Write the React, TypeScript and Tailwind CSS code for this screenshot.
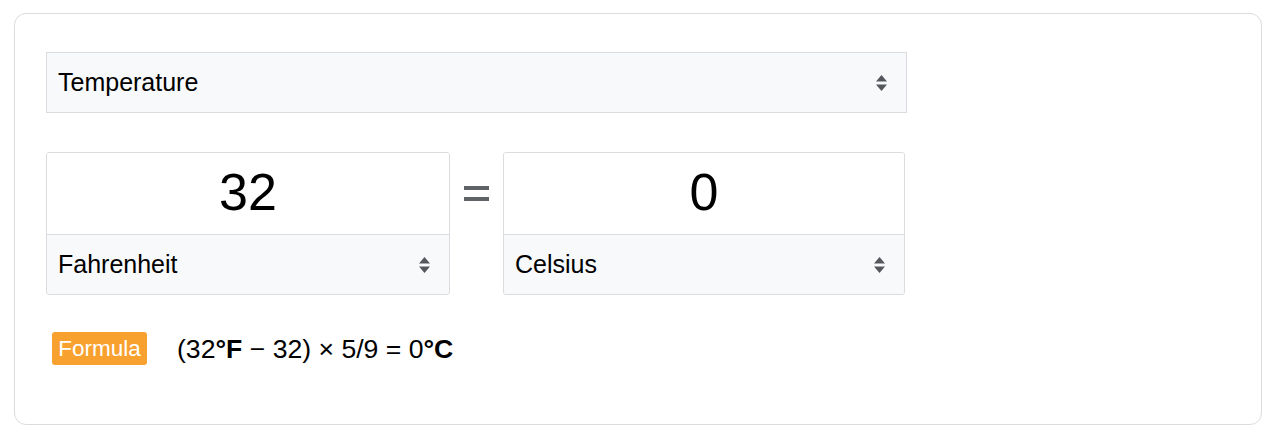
import React from "react";

const Chevrons = () => (
  <svg width="13" height="20" viewBox="0 0 13 20" className="shrink-0">
    <path d="M6.5 2 L12 8.5 L1 8.5 Z" fill="#54585c" />
    <path d="M1 11.5 L12 11.5 L6.5 18 Z" fill="#54585c" />
  </svg>
);

const SelectBox = ({ label, extra = "" }: { label: string; extra?: string }) => (
  <div
    className={`flex items-center justify-between bg-[#f8f9fa] pl-[11px] pr-[18px] text-[25px] text-black ${extra}`}
  >
    <span>{label}</span>
    <Chevrons />
  </div>
);

const UnitBox = ({ value, unit, width }: { value: string; unit: string; width: string }) => (
  <div className={`${width} h-[143px] flex flex-col border border-[#dadce0] rounded-[3px] overflow-hidden`}>
    <div className="h-[82px] flex items-center justify-center bg-white text-[52px] text-black border-b border-[#dadce0] pb-[3px]">
      {value}
    </div>
    <SelectBox label={unit} extra="flex-1" />
  </div>
);

export default function App() {
  return (
    <div
      className="w-[1280px] h-[436px] bg-white pt-[13px] pl-[14px]"
      style={{ fontFamily: '"Liberation Sans", Arial, sans-serif' }}
    >
      <div className="w-[1248px] h-[412px] border border-[#dadce0] rounded-[12px] pt-[38px] pl-[31px]">
        <div className="w-[861px]">
          <div className="h-[61px] border border-[#dadce0] flex">
            <SelectBox label="Temperature" extra="flex-1" />
          </div>
          <div className="mt-[39px] flex items-start">
            <UnitBox value="32" unit="Fahrenheit" width="w-[404px]" />
            <div className="w-[53px] h-[82px] flex flex-col items-center justify-center gap-[7px]">
              <div className="w-[25px] h-[4px] bg-[#5f6368]" />
              <div className="w-[25px] h-[4px] bg-[#5f6368]" />
            </div>
            <UnitBox value="0" unit="Celsius" width="w-[402px]" />
          </div>
          <div className="mt-[37px] flex items-center">
            <div className="ml-[6px] h-[33px] w-[95px] rounded-[3px] bg-[#f9a12e] text-white text-[22.5px] flex items-center justify-center">
              Formula
            </div>
            <div className="ml-[30px] text-[26.6px] leading-[32px] text-black">
              (32<b>°F</b> − 32) × 5/9 = 0<b>°C</b>
            </div>
          </div>
        </div>
      </div>
    </div>
  );
}
